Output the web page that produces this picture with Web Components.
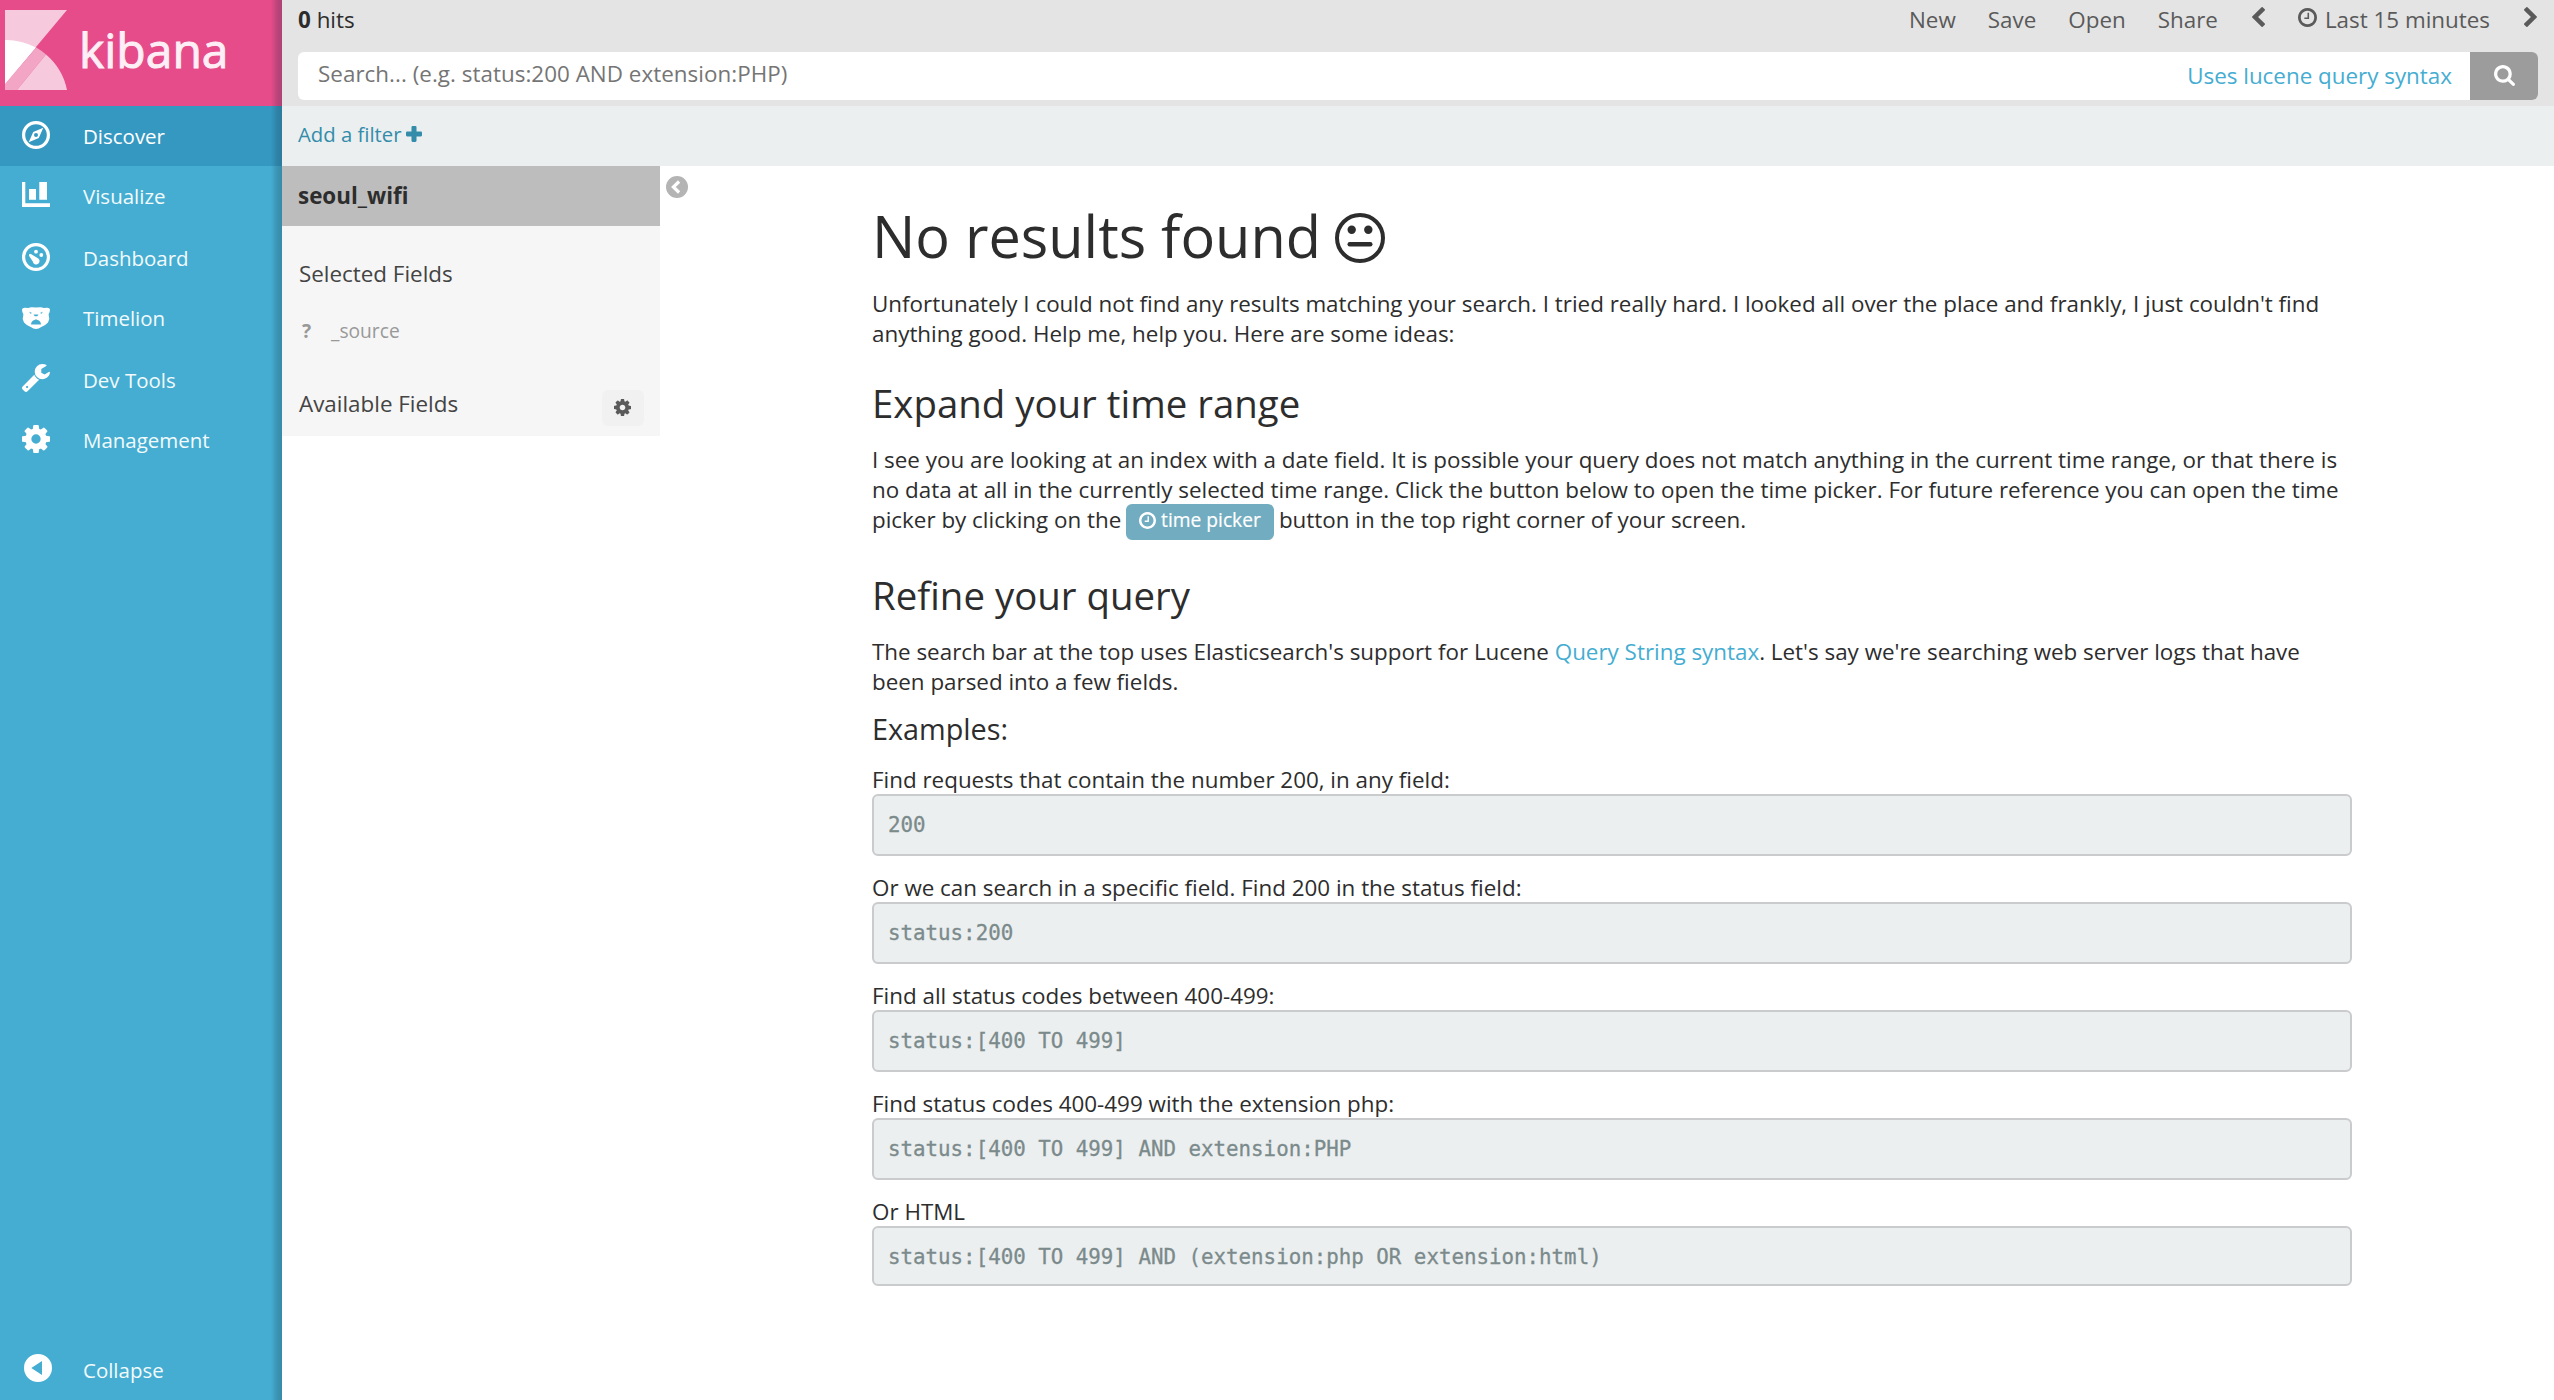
<!DOCTYPE html>
<html lang="en">
<head>
<meta charset="utf-8">
<title>Kibana</title>
<style>
html, body { margin: 0; height: 100%; background: #fff; }
body { font-family: "Open Sans", "Liberation Sans", sans-serif; color: #2d2d2d; font-size: 22.4px; line-height: 30px; overflow: hidden; }
</style>
</head>
<body>
<kbn-app></kbn-app>
<script>
const FA = {
  clock: ['128 128 1536 1536', '<path d="M1024 544v448q0 14-9 23t-23 9h-320q-14 0-23-9t-9-23v-64q0-14 9-23t23-9h224v-352q0-14 9-23t23-9h64q14 0 23 9t9 23zm416 352q0-148-73-273t-198-198-273-73-273 73-198 198-73 273 73 273 198 198 273 73 273-73 198-198 73-273zm224 0q0 209-103 385.5t-279.5 279.5-385.5 103-385.5-103-279.5-279.5-103-385.5 103-385.5 279.5-279.5 385.5-103 385.5 103 279.5 279.5 103 385.5z"/>'],
  cog: ['128 128 1536 1536', '<path d="M1152 896q0-106-75-181t-181-75-181 75-75 181 75 181 181 75 181-75 75-181zm512-109v222q0 12-8 23t-20 13l-185 28q-19 54-39 91 35 50 107 138 10 12 10 25t-9 23q-27 37-99 108t-94 71q-12 0-26-9l-138-108q-44 23-91 38-16 136-29 186-7 28-36 28h-222q-14 0-24.5-8.5t-11.5-21.5l-28-184q-49-16-90-37l-141 107q-10 9-25 9-14 0-25-11-126-114-165-168-7-10-7-23 0-12 8-23 15-21 51-66.5t54-70.5q-27-50-41-99l-183-27q-13-2-21-12.5t-8-23.5v-222q0-12 8-23t19-13l186-28q14-46 39-92-40-57-107-138-10-12-10-24 0-10 9-23 26-36 98.5-107.5t94.5-71.5q13 0 26 10l138 107q44-23 91-38 16-136 29-186 7-28 36-28h222q14 0 24.5 8.5t11.5 21.5l28 184q49 16 90 37l142-107q9-9 24-9 13 0 25 10 129 119 165 170 7 8 7 22 0 12-8 23-15 21-51 66.5t-54 70.5q26 50 41 98l183 28q13 2 21 12.5t8 23.5z"/>'],
  search: ['64 128 1664 1664', '<path d="M1216 832q0-185-131.5-316.5t-316.5-131.5-316.5 131.5-131.5 316.5 131.5 316.5 316.5 131.5 316.5-131.5 131.5-316.5zm512 832q0 52-38 90t-90 38q-54 0-90-38l-343-342q-179 124-399 124-143 0-273.5-55.5t-225-150-150-225-55.5-273.5 55.5-273.5 150-225 225-150 273.5-55.5 273.5 55.5 225 150 150 225 55.5 273.5q0 220-124 399l343 343q37 37 37 90z"/>'],
  left: ['410 26 1036 1612', '<path d="M1427 301l-531 531 531 531q19 19 19 45t-19 45l-166 166q-19 19-45 19t-45-19l-742-742q-19-19-19-45t19-45l742-742q19-19 45-19t45 19l166 166q19 19 19 45t-19 45z"/>'],
  right: ['410 26 1036 1612', '<path transform="translate(1856 0) scale(-1 1)" d="M1427 301l-531 531 531 531q19 19 19 45t-19 45l-166 166q-19 19-45 19t-45-19l-742-742q-19-19-19-45t19-45l742-742q19-19 45-19t45 19l166 166q19 19 19 45t-19 45z"/>'],
  wrench: ['85 128 1643 1643', '<path d="M448 1472q0-26-19-45t-45-19-45 19-19 45 19 45 45 19 45-19 19-45zm644-420l-682 682q-37 37-90 37-52 0-91-37l-106-108q-38-36-38-90 0-53 38-91l681-681q39 98 114.5 173.5t173.5 114.5zm634-435q0 39-23 106-47 134-164.5 217.5t-258.5 83.5q-185 0-316.5-131.5t-131.5-316.5 131.5-316.5 316.5-131.5q58 0 121.5 16.5t107.5 46.5q16 11 16 28t-16 28l-293 169v224l193 107q5-3 79-48.5t135.5-81 70.5-35.5q15 0 23.5 10t8.5 25z"/>'],
  plus: ['1 1 14 14', '<path d="M6.8 1h2.4q1 0 1 1v3.8H14q1 0 1 1v2.4q0 1-1 1h-3.8V14q0 1-1 1H6.8q-1 0-1-1v-3.8H2q-1 0-1-1V6.8q0-1 1-1h3.8V2q0-1 1-1z"/>'],
  meh: ['0 0 50 50', '<circle cx="25" cy="25" r="23" fill="none" stroke="currentColor" stroke-width="4"/><circle cx="16.7" cy="16.7" r="4.2"/><circle cx="33.3" cy="16.7" r="4.2"/><rect x="12.5" y="29" width="25" height="4.4" rx="2.2"/>'],
  back: ['0 0 22 22', '<circle cx="11" cy="11" r="11"/><path d="M13.1 5.5L7.4 11l5.7 5.5" fill="none" stroke="#fff" stroke-width="3.2"/>'],
  collapse: ['0 0 28 28', '<path fill-rule="evenodd" d="M14 0a14 14 0 1 1 0 28a14 14 0 1 1 0-28zM18 7L7.3 14L18 21z"/>'],
  compass: ['0 0 28 28', '<circle cx="14" cy="14" r="12.4" fill="none" stroke="currentColor" stroke-width="3.2"/><path fill-rule="evenodd" d="M21.3 6.7L16.8 17L6.7 21.3L11.2 11zM14 12a2 2 0 1 0 0 4a2 2 0 1 0 0-4z"/>'],
  chart: ['0 0 28 25', '<path d="M0 0h3.3v21.3H28V25H0zM7 7h7v10.7H7zM17.3 0H25v17.7h-7.7z"/>'],
  gauge: ['0 0 28 28', '<circle cx="14" cy="14" r="12.4" fill="none" stroke="currentColor" stroke-width="3.2"/><circle cx="14" cy="8.7" r="1.9"/><circle cx="19.3" cy="12" r="1.9"/><path d="M7.3 11.2Q8.2 10.3 9.3 11.2L15.5 14.9A3.4 3.4 0 1 1 10.8 18.5L7.3 13.2Q6.6 12 7.3 11.2z"/>'],
  bear: ['0 0 28 22', '<path fill-rule="evenodd" d="M0 2.5Q.3 .7 3 .8L6.5 1Q8 0 10 .2L14 .5L18 .2Q20 0 21.5 1L25 .8Q27.7 .7 28 2.5Q28 5.5 26.6 7.3L27.3 12L26 15.5Q23 19 18.8 20.2Q17 22 14 22T9.2 20.2Q5 19 2 15.5L.7 12L1.4 7.3Q0 5.5 0 2.5zM7.3 4.8L8.3 6.8L10 6zM20.7 4.8L19.7 6.8L18 6zM11.5 7.5h5L15.3 9.3h-2.6zM9 17.5Q9.3 13.5 12.5 13L14 12.3L15.5 13Q18.7 13.5 19 17.5z"/>']
};

const define = (name, css, html) => customElements.define(name, class extends HTMLElement {
  connectedCallback() {
    if (this.shadowRoot) return;
    const t = document.createElement('template');
    t.innerHTML = '<style>' + css + '</style>' + (typeof html === 'function' ? html(this) : html);
    this.attachShadow({ mode: 'open' }).append(t.content.cloneNode(true));
  }
});

define('kbn-icon',
  ':host{display:inline-block;flex:none;line-height:0} svg{display:block;width:100%;height:100%;fill:currentColor}',
  el => { const [box, body] = FA[el.getAttribute('name')]; return `<svg viewBox="${box}" preserveAspectRatio="none">${body}</svg>`; });

define('kbn-logo', `
  :host{display:flex;height:106px;background:#e64b8a;color:#fdeff5;box-sizing:border-box;padding:10px 0 0 5px}
  svg{width:62px;height:80px;flex:none}
  span{font-size:48px;line-height:66px;font-weight:500;margin:7px 0 0 12px;-webkit-text-stroke:1px currentColor}`, `
  <svg viewBox="5 10 62 80">
    <path fill="#f6cadc" d="M5 10H67L5 84z"/>
    <path fill="#f3a5c5" d="M5 90V84L36.3 47.5Q41.5 50.5 46 54.5L17 90z"/>
    <path fill="#fff" d="M5 40A63 63 0 0 1 36 47.6L5 84z"/>
    <path fill="#f6cadc" d="M46 54.5A63 63 0 0 1 67 90H17z"/>
  </svg><span>kibana</span>`);

define('kbn-nav-item', `
  :host{display:flex;align-items:flex-start;height:62px;box-sizing:border-box;font-size:20.48px;color:#f2fafc}
  :host([short]){height:60px}
  :host([active]){background:#3598c1;color:#fff}
  .i{width:83px;height:58px;flex:none;display:flex;align-items:center;padding-left:22px;box-sizing:border-box;color:#fff}
  span{line-height:60px}`,
  el => `<div class="i"><kbn-icon name="${el.getAttribute('icon')}" style="width:28px;height:${el.getAttribute('h') || 28}px;margin-top:${el.getAttribute('dy') || 0}px;margin-left:${el.getAttribute('dx') || 0}px"></kbn-icon></div><span><slot></slot></span>`);

define('kbn-sidebar', `
  :host{display:flex;flex-direction:column;width:282px;flex:none;position:relative;background:#45add1}
  :host::after{content:"";position:absolute;top:0;right:0;bottom:0;width:11px;background:linear-gradient(to left,rgba(20,45,60,.27),rgba(20,45,60,.2) 5px,rgba(20,45,60,0))}
  .gap{flex:1}
  .foot{padding-bottom:1px}`, `
  <kbn-logo></kbn-logo>
  <kbn-nav-item active short icon="compass">Discover</kbn-nav-item>
  <kbn-nav-item icon="chart" h="25" dy="-2">Visualize</kbn-nav-item>
  <kbn-nav-item short icon="gauge">Dashboard</kbn-nav-item>
  <kbn-nav-item icon="bear" h="22" dy="2">Timelion</kbn-nav-item>
  <kbn-nav-item short icon="wrench" dy="-2">Dev Tools</kbn-nav-item>
  <kbn-nav-item icon="cog">Management</kbn-nav-item>
  <div class="gap"></div>
  <kbn-nav-item class="foot" short icon="collapse" dx="2" dy="-2">Collapse</kbn-nav-item>`);

define('kbn-topbar', `
  :host{display:flex;flex-direction:column;height:106px;background:#e4e4e4;box-sizing:border-box;padding:0 16px}
  .row{display:flex;height:52px;color:#5a5a5a;line-height:40px}
  .hits{color:#2d2d2d;flex:1}
  .row span{margin-right:32px;white-space:nowrap}
  kbn-icon{margin-top:7px}
  .search{display:flex;height:48px;background:#fff;border-radius:6px;overflow:hidden;line-height:44px}
  .ph{flex:1;padding-left:20px;color:#757575;letter-spacing:.03px}
  .lucene{color:#45add1;line-height:47px;margin-right:18px}
  .go{width:68px;background:#9c9c9c;color:#fff;display:flex;justify-content:center}
  .go kbn-icon{margin-top:12.5px}`, `
  <div class="row"><div class="hits"><b>0</b> hits</div>
    <span>New</span><span>Save</span><span>Open</span><span style="margin-right:34px">Share</span>
    <kbn-icon name="left" style="width:13px;height:20px;margin-right:33px"></kbn-icon>
    <kbn-icon name="clock" style="width:19px;height:19px;margin-top:8px;margin-right:8px"></kbn-icon>
    <span style="margin-right:34px">Last 15 minutes</span>
    <kbn-icon name="right" style="width:13px;height:20px;margin-right:1px"></kbn-icon></div>
  <div class="search"><div class="ph">Search... (e.g. status:200 AND extension:PHP)</div><div class="lucene">Uses lucene query syntax</div>
    <div class="go"><kbn-icon name="search" style="width:21px;height:21px"></kbn-icon></div></div>`);

define('kbn-filterbar', `
  :host{display:flex;height:60px;background:#ebeff0;color:#328caa;font-size:20.3px;line-height:57px;padding-left:16px}
  kbn-icon{width:16px;height:16px;margin:20px 0 0 5px}`,
  '<span>Add a filter</span><kbn-icon name="plus"></kbn-icon>');

define('kbn-fields', `
  :host{display:flex;flex-direction:column;width:378px;height:270px;flex:none;background:#f6f6f6}
  .ix{height:60px;line-height:60px;padding-left:16px;background:#bdbdbd;font-weight:700}
  .h{color:#444;line-height:30px;padding-left:17px;white-space:nowrap}
  .sel{margin-top:33px}
  .f{display:flex;font-size:19.2px;line-height:30px;color:#999;margin:27px 0 0 20px}
  .f b{width:29px}
  .av{display:flex;margin-top:39px;align-items:flex-start}
  .av span{flex:1;margin-top:4px}
  .g{width:42px;height:36px;border-radius:6px;background:#f1f1f1;margin:5px 16px 0 0;display:flex;align-items:center;justify-content:center;color:#5a5a5a}
  .g kbn-icon{width:17px;height:17px;margin-top:-1px;margin-right:2px}`, `
  <div class="ix">seoul_wifi</div>
  <div class="h sel">Selected Fields</div>
  <div class="f"><b>?</b>_source</div>
  <div class="h av"><span>Available Fields</span><div class="g"><kbn-icon name="cog"></kbn-icon></div></div>`);

define('kbn-example', `
  :host{display:block;height:108px}
  .l{box-sizing:border-box;height:30px;padding-top:1px}
  .c{box-sizing:border-box;height:62px;border:2px solid #c9cbcc;border-radius:6px;background:#ebeff0;color:#7b8a8b;font:20.8px/58px "DejaVu Sans Mono","Liberation Mono",monospace;padding-left:14px;white-space:pre;-webkit-text-stroke:.3px currentColor}
  :host([last]) .c{height:60px}`,
  el => `<div class="l"><slot></slot></div><div class="c">${el.getAttribute('code')}</div>`);

define('time-picker-button', `
  :host{display:inline-flex;box-sizing:border-box;width:148px;height:36px;margin:-1px -1px -5px;vertical-align:top;background:#71acc1;color:#fff;border-radius:6px;font-size:19.2px;line-height:31px;padding-left:13px;-webkit-text-stroke:.2px currentColor}
  kbn-icon{width:17px;height:17px;margin:8px 5px 0 0}`,
  '<kbn-icon name="clock"></kbn-icon><slot></slot>');

define('no-results', `
  :host{display:block;width:1480px;margin:38px 0 0 212px;white-space:nowrap}
  h1,h3,h4,p{margin:0;font-weight:400}
  h1{font-size:57.6px;line-height:64px;height:64px;display:flex}
  h1 kbn-icon{width:50px;height:50px;margin:9px 0 0 14px}
  h3{font-size:38.4px;line-height:42px;margin-bottom:21px}
  h4{font-size:28.8px;line-height:32px;margin:16px 0 19px}
  .p1{margin:21px 0 33px} .p2{margin-bottom:39px}
  a{color:#45add1}`, `
  <h1>No results found<kbn-icon name="meh"></kbn-icon></h1>
  <p class="p1">Unfortunately I could not find any results matching your search. I tried really hard. I looked all over the place and frankly, I just couldn't find<br>anything good. Help me, help you. Here are some ideas:</p>
  <h3>Expand your time range</h3>
  <p class="p2">I see you are looking at an index with a date field. It is possible your query does not match anything in the current time range, or that there is<br>no data at all in the currently selected time range. Click the button below to open the time picker. For future reference you can open the time<br>picker by clicking on the <time-picker-button>time picker</time-picker-button> button in the top right corner of your screen.</p>
  <h3>Refine your query</h3>
  <p>The search bar at the top uses Elasticsearch's support for Lucene <a>Query String syntax</a>. Let's say we're searching web server logs that have<br>been parsed into a few fields.</p>
  <h4>Examples:</h4>
  <kbn-example code="200">Find requests that contain the number 200, in any field:</kbn-example>
  <kbn-example code="status:200">Or we can search in a specific field. Find 200 in the status field:</kbn-example>
  <kbn-example code="status:[400 TO 499]">Find all status codes between 400-499:</kbn-example>
  <kbn-example code="status:[400 TO 499] AND extension:PHP">Find status codes 400-499 with the extension php:</kbn-example>
  <kbn-example last code="status:[400 TO 499] AND (extension:php OR extension:html)">Or HTML</kbn-example>`);

define('kbn-app', `
  :host{display:flex;height:1400px;width:2554px}
  main{flex:1;min-width:0;display:flex;flex-direction:column}
  .body{display:flex;align-items:flex-start}
  .back{width:22px;height:22px;margin:10px -28px 0 6px;color:#b4b4b4}`, `
  <kbn-sidebar></kbn-sidebar>
  <main><kbn-topbar></kbn-topbar><kbn-filterbar></kbn-filterbar>
    <div class="body"><kbn-fields></kbn-fields><kbn-icon class="back" name="back"></kbn-icon><no-results></no-results></div>
  </main>`);
</script>
</body>
</html>
